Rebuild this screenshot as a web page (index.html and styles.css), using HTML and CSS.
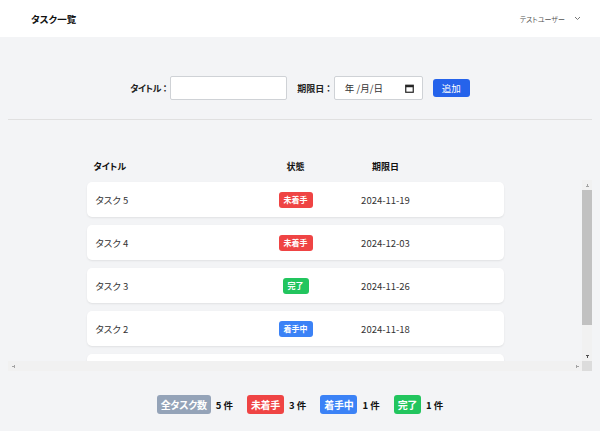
FILE: index.html
```html
<!DOCTYPE html>
<html lang="ja">
<head>
<meta charset="utf-8">
<title>タスク一覧</title>
<link rel="stylesheet" href="styles.css">
</head>
<body>
<header class="topbar">
  <h1 class="brand">タスク一覧</h1>
  <div class="user">テストユーザー
    <svg class="chev" width="7" height="5" viewBox="0 0 7 5"><polyline points="1,1 3.5,3.5 6,1" fill="none" stroke="#777" stroke-width="1"/></svg>
  </div>
</header>
<main class="main">
  <form class="add-form">
    <label class="lbl"><span class="kana">タイトル</span><span class="colon">：</span></label>
    <input class="txt" type="text">
    <label class="lbl">期限日<span class="colon">：</span></label>
    <div class="date-field">
      <span class="date-ph">年 /月/日</span>
      <svg class="cal" width="9" height="9" viewBox="0 0 9 9"><rect x="0.75" y="1.25" width="7.5" height="7" fill="none" stroke="#222" stroke-width="1.2"/><rect x="0.75" y="1.25" width="7.5" height="2" fill="#222"/></svg>
    </div>
    <button class="btn" type="button">追加</button>
  </form>

  <section class="list">
    <div class="list-head">
      <div class="grid head-grid">
        <div class="c-title">タイトル</div>
        <div class="c-center">状態</div>
        <div class="c-center">期限日</div>
        <div></div>
      </div>
    </div>
    <div class="scroll-frame">
      <div class="viewport">
        <div class="rows">
          <div class="grid row"><div class="c-title">タスク 5</div><div class="c-center"><span class="badge red">未着手</span></div><div class="c-center">2024-11-19</div><div></div></div>
          <div class="grid row"><div class="c-title">タスク 4</div><div class="c-center"><span class="badge red">未着手</span></div><div class="c-center">2024-12-03</div><div></div></div>
          <div class="grid row"><div class="c-title">タスク 3</div><div class="c-center"><span class="badge green">完了</span></div><div class="c-center">2024-11-26</div><div></div></div>
          <div class="grid row"><div class="c-title">タスク 2</div><div class="c-center"><span class="badge blue">着手中</span></div><div class="c-center">2024-11-18</div><div></div></div>
          <div class="grid row"><div class="c-title">タスク 1</div><div class="c-center"><span class="badge green">完了</span></div><div class="c-center">2024-11-10</div><div></div></div>
        </div>
      </div>
      <div class="vbar">
        <span class="sb-btn arr-up"></span>
        <span class="vtrack"><span class="vthumb"></span></span>
        <span class="sb-btn arr-down"></span>
      </div>
      <div class="hbar">
        <span class="sb-btn arr-left"></span>
        <span class="htrack"></span>
        <span class="sb-btn arr-right"></span>
      </div>
      <div class="corner"></div>
    </div>
  </section>

  <div class="summary">
    <span class="sbadge gray">全タスク数</span><span class="count">5 件</span>
    <span class="sbadge red">未着手</span><span class="count">3 件</span>
    <span class="sbadge blue">着手中</span><span class="count">1 件</span>
    <span class="sbadge green">完了</span><span class="count">1 件</span>
  </div>
</main>
</body>
</html>
```

FILE: styles.css
```css
* { box-sizing: border-box; }
html, body { margin: 0; padding: 0; }
body {
  background: #f3f4f6;
  font-family: "Noto Sans CJK JP", "Noto Sans", sans-serif;
  font-feature-settings: "palt";
  color: #222;
  width: 600px;
  height: 431px;
  overflow: hidden;
}
.topbar {
  height: 37px;
  background: #fff;
  display: flex;
  align-items: center;
  justify-content: space-between;
  padding: 0 19px 0 31px;
}
.brand {
  margin: 0;
  font-size: 9.5px;
  font-weight: 700;
  color: #111;
}
.user {
  font-size: 7px;
  color: #555;
  display: flex;
  align-items: center;
  gap: 9px;
}
.chev { display: block; }
.main { padding: 0 8px; }
.add-form {
  display: flex;
  justify-content: center;
  align-items: center;
  padding: 39px 0 19px;
  border-bottom: 1px solid #e0e0e0;
}
.lbl {
  font-size: 9px;
  font-weight: 700;
  color: #222;
  margin-right: 3px;
}
.kana { letter-spacing: -0.5px; }
.colon { padding-left: 2px; }
.txt {
  width: 117px;
  height: 24px;
  border: 1px solid #cfd2d6;
  border-radius: 2px;
  background: #fff;
  margin: 0 10px 0 0;
  padding: 0;
  font: inherit;
}
.date-field {
  width: 89px;
  height: 24px;
  border: 1px solid #cfd2d6;
  border-radius: 2px;
  background: #fff;
  display: flex;
  align-items: center;
  justify-content: space-between;
  padding: 0 8px 0 10px;
  margin-right: 10px;
}
.date-ph { font-size: 9.5px; color: #333; white-space: pre; }
.cal { display: block; }
.btn {
  width: 37px;
  height: 18px;
  border: 0;
  border-radius: 3px;
  background: #2563eb;
  color: #fff;
  font-family: inherit;
  font-feature-settings: "palt";
  font-size: 9.5px;
  padding: 0;
}
.list { padding-top: 40px; }
.list-head { padding-right: 10px; height: 20px; }
.grid {
  width: 417px;
  margin: 0 auto;
  display: grid;
  grid-template-columns: 169px 80px 100px 1fr;
  align-items: center;
}
.head-grid {
  font-size: 9px;
  font-weight: 700;
  color: #111;
}
.head-grid .c-title { padding-left: 7px; }
.c-center { text-align: center; }

.scroll-frame {
  display: grid;
  grid-template-columns: 1fr 10px;
  grid-template-rows: 181px 10px;
}
.viewport { overflow: hidden; }
.vbar, .hbar { background: #f1f1f1; display: flex; }
.vbar { flex-direction: column; }
.corner { background: #dcdcdc; }
.sb-btn {
  flex: none;
  width: 10px;
  height: 10px;
  background-repeat: no-repeat;
  background-position: center;
}
.vtrack { flex: 1; display: flex; flex-direction: column; }
.vthumb { height: 135px; background: #c1c1c1; }
.htrack { flex: 1; }
.arr-up {
  background-image: conic-gradient(from 150deg at 50% 0%, #a3a3a3 0 60deg, transparent 0);
  background-size: 5px 3px;
}
.arr-down {
  background-image: conic-gradient(from -30deg at 50% 100%, #505050 0 60deg, transparent 0);
  background-size: 5px 3px;
}
.arr-left {
  background-image: conic-gradient(from 60deg at 0% 50%, #a3a3a3 0 60deg, transparent 0);
  background-size: 3px 5px;
}
.arr-right {
  background-image: conic-gradient(from 240deg at 100% 50%, #a3a3a3 0 60deg, transparent 0);
  background-size: 3px 5px;
}

.rows { padding: 2px 0 2px; }
.row {
  height: 35px;
  background: #fff;
  border-radius: 5px;
  box-shadow: 0 1px 2px rgba(0,0,0,0.08);
  margin-bottom: 8px;
  font-size: 9.5px;
  color: #333;
}
.row .c-title { padding-left: 9px; }
.badge {
  display: inline-block;
  height: 16px;
  line-height: 16px;
  padding: 0 5px;
  border-radius: 3px;
  color: #fff;
  font-size: 8px;
  font-weight: 700;
}
.red { background: #ef4444; }
.green { background: #22c55e; }
.blue { background: #3b82f6; }
.gray { background: #94a3b8; }
.summary {
  display: flex;
  justify-content: center;
  align-items: center;
  padding-top: 24px;
}
.sbadge {
  height: 19px;
  line-height: 19px;
  padding: 0 4px;
  border-radius: 3px;
  color: #fff;
  font-size: 10px;
  font-weight: 700;
  letter-spacing: -0.3px;
  margin-right: 5px;
}
.count {
  font-size: 9.5px;
  font-weight: 700;
  color: #111;
  margin-right: 14px;
}
.count:last-child { margin-right: 0; }
```
